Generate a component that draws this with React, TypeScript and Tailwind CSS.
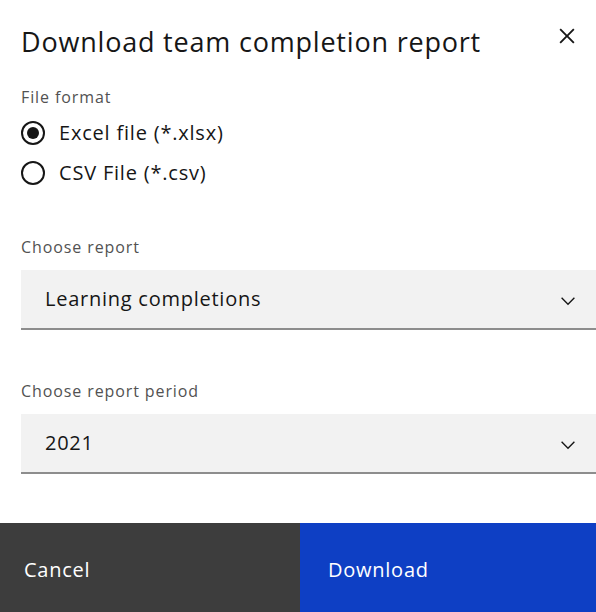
import React, { useState } from "react";

const font = { fontFamily: '"Open Sans", "Noto Sans", Arial, sans-serif' };

const ChevronDown = () => (
  <svg width="22" height="22" viewBox="0 0 16 16" fill="#161616" className="mt-[4px]">
    <path d="M8 11L3 6 3.7 5.3 8 9.6 12.3 5.3 13 6z" />
  </svg>
);

const CloseIcon = () => (
  <svg width="30" height="30" viewBox="0 0 32 32" fill="#161616">
    <path d="M24 9.4L22.6 8 16 14.6 9.4 8 8 9.4 14.6 16 8 22.6 9.4 24 16 17.4 22.6 24 24 22.6 17.4 16 24 9.4z" />
  </svg>
);

const Radio: React.FC<{ checked: boolean; label: string; onClick: () => void }> = ({ checked, label, onClick }) => (
  <button onClick={onClick} className="flex items-center h-[40px] gap-[14px] text-left">
    <span className="w-[24px] h-[24px] rounded-full border-2 border-[#161616] flex items-center justify-center">
      {checked && <span className="w-[12px] h-[12px] rounded-full bg-[#161616]" />}
    </span>
    <span className="text-[20px] tracking-[0.8px] text-[#161616]">{label}</span>
  </button>
);

const SelectField: React.FC<{ label: string; value: string }> = ({ label, value }) => (
  <div>
    <p className="text-[16px] leading-[20px] tracking-[0.9px] text-[#525252] ml-[21px]">{label}</p>
    <div className="mt-[13px] ml-[21px] h-[60px] bg-[#f2f2f2] border-b-2 border-[#8d8d8d] flex items-center justify-between pl-[24px] pr-[17px]">
      <span className="text-[20px] tracking-[0.75px] text-[#161616]">{value}</span>
      <ChevronDown />
    </div>
  </div>
);

export default function App() {
  const [format, setFormat] = useState("xlsx");

  return (
    <div className="w-[596px] h-[612px] bg-white flex flex-col overflow-hidden" style={font}>
      <div className="flex items-start justify-between pl-[21px] pr-[14px] pt-[24px]">
        <h1 className="text-[27px] leading-[36px] tracking-[0.8px] text-[#161616]">Download team completion report</h1>
        <button className="mt-[-3px]"><CloseIcon /></button>
      </div>

      <p className="mt-[27px] ml-[21px] text-[16px] leading-[20px] tracking-[0.9px] text-[#525252]">File format</p>
      <div className="ml-[21px] mt-[6px] flex flex-col">
        <Radio checked={format === "xlsx"} label="Excel file (*.xlsx)" onClick={() => setFormat("xlsx")} />
        <Radio checked={format === "csv"} label="CSV File (*.csv)" onClick={() => setFormat("csv")} />
      </div>

      <div className="mt-[44px]">
        <SelectField label="Choose report" value="Learning completions" />
      </div>
      <div className="mt-[51px]">
        <SelectField label="Choose report period" value="2021" />
      </div>

      <div className="mt-auto h-[89px] flex">
        <button className="w-[300px] bg-[#3d3d3d] text-white text-[20px] tracking-[0.75px] text-left pl-[24px] pt-[4px]">Cancel</button>
        <button className="flex-1 bg-[#0e3fc4] text-white text-[20px] tracking-[0.75px] text-left pl-[28px] pt-[4px]">Download</button>
      </div>
    </div>
  );
}
